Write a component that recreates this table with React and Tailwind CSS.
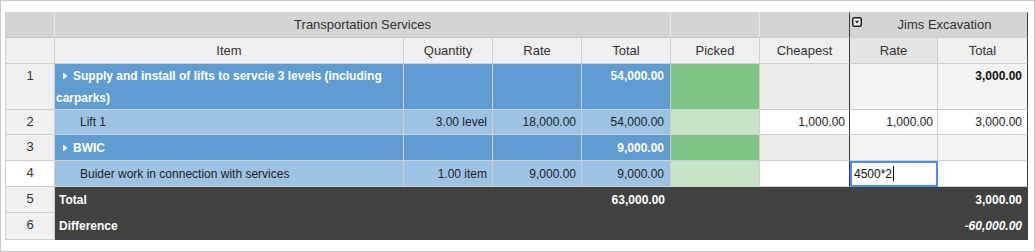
import React from 'react';

const B = 'border-r border-b border-[#cfcfcf]';
const H1 = 'border-r border-b border-r-[#e9e9e9] border-b-[#c8c8c8]';
const DARK_R = 'border-r border-b border-r-[#3a3a3a] border-b-[#cfcfcf]';

const Arrow = () => (
  <svg width="5" height="8" viewBox="0 0 5 8" className="inline-block ml-[7px] mr-[5px] align-[-0px]">
    <path d="M0 0.5 L4.5 4 L0 7.5 Z" fill="#ffffff" />
  </svg>
);

const DropIcon = () => (
  <svg width="10" height="10" viewBox="0 0 10 10" className="absolute left-[2px] top-[4px]">
    <rect x="0.75" y="0.75" width="8.5" height="8.5" rx="1.5" fill="#f4f4f4" stroke="#222" strokeWidth="1.5" />
    <path d="M2.8 3.8 L7.2 3.8 L5 6.6 Z" fill="#222" />
  </svg>
);

const Num = ({ n, white }) => (
  <td className={`${B} border-l border-l-[#cfcfcf] ${white ? 'bg-white' : 'bg-[#f0f0f0]'} text-center text-[#333] text-[13px] font-normal align-top pt-[1px]`}>{n}</td>
);

export default function App() {
  return (
    <div className="w-[1035px] h-[252px] border border-[#c8c8c8] bg-white pl-[4px] pt-[11px] font-['Liberation_Sans',Arial,sans-serif] text-[12px] leading-[22px]">
      <table className="table-fixed w-[1023px] border-separate border-spacing-0">
        <colgroup>
          <col className="w-[50px]" />
          <col className="w-[349px]" />
          <col className="w-[89px]" />
          <col className="w-[89px]" />
          <col className="w-[89px]" />
          <col className="w-[89px]" />
          <col className="w-[90px]" />
          <col className="w-[88px]" />
          <col className="w-[90px]" />
        </colgroup>
        <thead className="text-[13px]">
          <tr className="h-[26px] text-[#333]">
            <th className={`${H1} border-l border-t border-l-[#cfcfcf] border-t-[#cfcfcf] bg-[#d4d4d4] font-normal`}></th>
            <th colSpan={4} className={`${H1} border-t border-t-[#cfcfcf] bg-[#d4d4d4] font-normal text-center`}>Transportation Services</th>
            <th className={`${H1} border-t border-t-[#cfcfcf] bg-[#d4d4d4] font-normal`}></th>
            <th className={`${DARK_R} border-t border-t-[#cfcfcf] bg-[#d4d4d4] font-normal`}></th>
            <th colSpan={2} className={`${DARK_R} border-t border-t-[#cfcfcf] bg-[#d4d4d4] font-normal text-center relative pl-[12px]`}>
              <DropIcon />
              Jims Excavation
            </th>
          </tr>
          <tr className="h-[26px] text-[#333]">
            <th className={`${B} border-l bg-[#efefef] font-normal`}></th>
            <th className={`${B} bg-[#efefef] font-normal text-center`}>Item</th>
            <th className={`${B} bg-[#efefef] font-normal text-center`}>Quantity</th>
            <th className={`${B} bg-[#efefef] font-normal text-center`}>Rate</th>
            <th className={`${B} bg-[#efefef] font-normal text-center`}>Total</th>
            <th className={`${B} bg-[#efefef] font-normal text-center`}>Picked</th>
            <th className={`${DARK_R} bg-[#efefef] font-normal text-center`}>Cheapest</th>
            <th className={`${B} bg-[#e4e4e4] font-normal text-center`}>Rate</th>
            <th className={`${DARK_R} bg-[#efefef] font-normal text-center`}>Total</th>
          </tr>
        </thead>
        <tbody>
          {/* group row 1 */}
          <tr className="h-[46px]">
            <Num n="1" />
            <td className={`${B} bg-[#5f9cd2] text-white font-bold align-top pl-[1px] pt-[1px]`}>
              <Arrow />Supply and install of lifts to servcie 3 levels (including carparks)
            </td>
            <td className={`${B} bg-[#5f9cd2]`}></td>
            <td className={`${B} bg-[#5f9cd2]`}></td>
            <td className={`${B} bg-[#5f9cd2] text-white font-bold text-right pr-[6px] align-top pt-[1px]`}>54,000.00</td>
            <td className={`${B} bg-[#80c584]`}></td>
            <td className={`${DARK_R} bg-[#ebebeb]`}></td>
            <td className={`${B} bg-[#f3f3f3]`}></td>
            <td className={`${DARK_R} bg-[#f3f3f3] text-[#111] font-bold text-right pr-[5px] align-top pt-[1px]`}>3,000.00</td>
          </tr>
          {/* item row 2 */}
          <tr className="h-[25px] text-[#222]">
            <Num n="2" />
            <td className={`${B} bg-[#9dc3e4] pl-[25px]`}>Lift 1</td>
            <td className={`${B} bg-[#9dc3e4] text-right pr-[5px]`}>3.00 level</td>
            <td className={`${B} bg-[#9dc3e4] text-right pr-[5px]`}>18,000.00</td>
            <td className={`${B} bg-[#9dc3e4] text-right pr-[6px]`}>54,000.00</td>
            <td className={`${B} bg-[#c6e4c7]`}></td>
            <td className={`${DARK_R} bg-white text-right pr-[4px] text-[#222]`}>1,000.00</td>
            <td className={`${B} bg-white text-right pr-[4px]`}>1,000.00</td>
            <td className={`${DARK_R} bg-white text-right pr-[5px]`}>3,000.00</td>
          </tr>
          {/* group row 3 */}
          <tr className="h-[26px]">
            <Num n="3" />
            <td className={`${B} bg-[#5f9cd2] text-white font-bold pl-[1px]`}>
              <Arrow />BWIC
            </td>
            <td className={`${B} bg-[#5f9cd2]`}></td>
            <td className={`${B} bg-[#5f9cd2]`}></td>
            <td className={`${B} bg-[#5f9cd2] text-white font-bold text-right pr-[6px]`}>9,000.00</td>
            <td className={`${B} bg-[#80c584]`}></td>
            <td className={`${DARK_R} bg-[#ebebeb]`}></td>
            <td className={`${B} bg-[#f3f3f3]`}></td>
            <td className={`${DARK_R} bg-[#f3f3f3]`}></td>
          </tr>
          {/* item row 4 */}
          <tr className="h-[26px] text-[#222]">
            <Num n="4" white />
            <td className={`${B} bg-[#9dc3e4] pl-[25px]`}>Buider work in connection with services</td>
            <td className={`${B} bg-[#9dc3e4] text-right pr-[5px]`}>1.00 item</td>
            <td className={`${B} bg-[#9dc3e4] text-right pr-[5px]`}>9,000.00</td>
            <td className={`${B} bg-[#9dc3e4] text-right pr-[6px]`}>9,000.00</td>
            <td className={`${B} bg-[#c6e4c7]`}></td>
            <td className={`${DARK_R} bg-white`}></td>
            <td className="border-2 border-[#4a8ef5] bg-white pl-[2px] text-[#111]">
              4500*2<span className="inline-block w-[1px] h-[15px] bg-black align-[-3px] ml-[1px]"></span>
            </td>
            <td className={`${DARK_R} bg-white`}></td>
          </tr>
          {/* footer */}
          <tr className="h-[26px] text-white font-bold">
            <Num n="5" />
            <td className="bg-[#424242] border-b border-[#424242] pl-[4px]">Total</td>
            <td className="bg-[#424242] border-b border-[#424242]"></td>
            <td className="bg-[#424242] border-b border-[#424242]"></td>
            <td className="bg-[#424242] border-b border-[#424242] text-right pr-[6px]">63,000.00</td>
            <td className="bg-[#424242] border-b border-[#424242]"></td>
            <td className="bg-[#424242] border-b border-[#424242]"></td>
            <td className="bg-[#424242] border-b border-[#424242]"></td>
            <td className="bg-[#424242] border-b border-r border-[#424242] text-right pr-[5px]">3,000.00</td>
          </tr>
          <tr className="h-[27px] text-white font-bold">
            <Num n="6" />
            <td className="bg-[#424242] border-b border-[#424242] pl-[4px]">Difference</td>
            <td className="bg-[#424242] border-b border-[#424242]"></td>
            <td className="bg-[#424242] border-b border-[#424242]"></td>
            <td className="bg-[#424242] border-b border-[#424242]"></td>
            <td className="bg-[#424242] border-b border-[#424242]"></td>
            <td className="bg-[#424242] border-b border-[#424242]"></td>
            <td className="bg-[#424242] border-b border-[#424242]"></td>
            <td className="bg-[#424242] border-b border-r border-[#424242] text-right pr-[5px] italic">-60,000.00</td>
          </tr>
        </tbody>
      </table>
    </div>
  );
}
